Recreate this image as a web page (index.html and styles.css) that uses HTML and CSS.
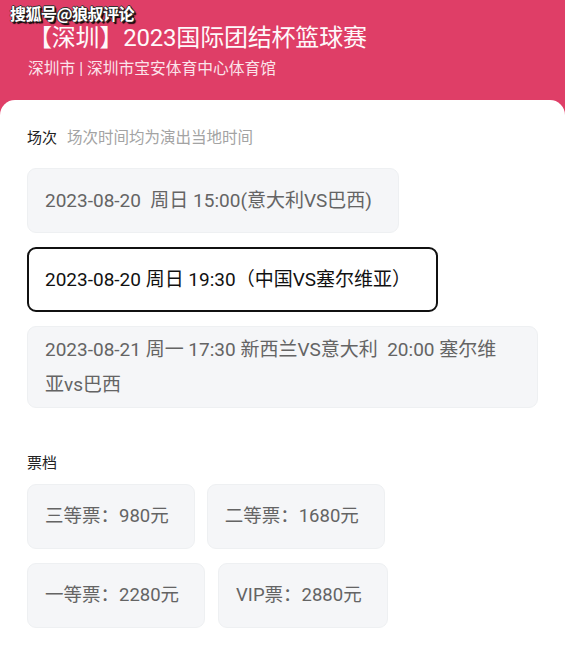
FILE: index.html
```html
<!DOCTYPE html>
<html lang="zh-CN">
<head>
<meta charset="utf-8">
<title>2023国际团结杯篮球赛</title>
<link rel="stylesheet" href="styles.css">
</head>
<body>
<div class="page">
  <div class="watermark">搜狐号@狼叔评论</div>
  <header class="hero">
    <h1 class="title">【深圳】2023国际团结杯篮球赛</h1>
    <p class="venue">深圳市 | 深圳市宝安体育中心体育馆</p>
  </header>
  <main class="panel">
    <div class="section-head">
      <span class="section-title">场次</span>
      <span class="section-hint">场次时间均为演出当地时间</span>
    </div>
    <div class="session-list">
      <div class="option">2023-08-20&nbsp; 周日 15:00(意大利VS巴西)</div>
      <div class="option selected">2023-08-20 周日 19:30（中国VS塞尔维亚）</div>
      <div class="option multi">2023-08-21 周一 17:30 新西兰VS意大利&nbsp; 20:00 塞尔维亚vs巴西</div>
    </div>
    <div class="section-head tickets-head">
      <span class="section-title">票档</span>
    </div>
    <div class="ticket-grid">
      <div class="ticket-row">
        <div class="option ticket">三等票：980元</div>
        <div class="option ticket">二等票：1680元</div>
      </div>
      <div class="ticket-row row-b">
        <div class="option ticket">一等票：2280元</div>
        <div class="option ticket">VIP票：2880元</div>
      </div>
    </div>
  </main>
</div>
</body>
</html>
```

FILE: styles.css
```css
* { box-sizing: border-box; }
html, body {
  margin: 0;
  padding: 0;
}
body {
  background: #df3e67;
  font-family: Roboto, "Noto Sans CJK SC", sans-serif;
  width: 565px;
  height: 670px;
  overflow: hidden;
}
.page {
  position: relative;
  display: flex;
  flex-direction: column;
  min-height: 670px;
}
.watermark {
  position: absolute;
  left: 10px;
  top: 2px;
  font-family: "Noto Sans CJK SC", sans-serif;
  font-size: 16px;
  font-weight: 700;
  line-height: 22px;
  color: #fff;
  text-shadow: 1px 1px 0 #222, -1px 0 0 #333, 0 -1px 0 #333, 1px 0 0 #222, 2px 2px 1px #000;
  letter-spacing: -0.5px;
  z-index: 2;
}
.hero {
  height: 100px;
  padding: 21px 0 0 28px;
  color: #fff;
}
.title {
  margin: 0;
  font-weight: 400;
  font-size: 24px;
  line-height: 34px;
  letter-spacing: -0.2px;
  opacity: 0.97;
}
.venue {
  margin: 4px 0 0 0;
  font-size: 15.75px;
  line-height: 20px;
  color: #fbe3ea;
}
.panel {
  flex: 1;
  background: #fff;
  border-radius: 15px 15px 0 0;
  padding: 28px 27px 0 27px;
}
.section-head {
  display: flex;
  align-items: center;
  gap: 10px;
  line-height: 20px;
}
.section-title {
  font-size: 15px;
  color: #222;
}
.section-hint {
  font-size: 15.5px;
  color: #a3a3a3;
}
.session-list {
  margin-top: 20px;
  display: flex;
  flex-direction: column;
  align-items: flex-start;
  gap: 14px;
}
.option {
  display: flex;
  align-items: center;
  min-height: 65px;
  padding: 5px 26px 5px 17px;
  background: #f5f6f8;
  border: 1px solid #eef0f2;
  border-radius: 9px;
  font-size: 19px;
  line-height: 35px;
  color: #646464;
  max-width: 100%;
}
.option.selected {
  background: #fff;
  border: 2px solid #111;
  padding: 5px 25px 5px 16px;
  color: #111;
}
.option.multi {
  min-height: 81px;
  width: 100%;
}
.tickets-head {
  margin-top: 45px;
}
.ticket-grid {
  margin-top: 11px;
  display: flex;
  flex-direction: column;
  gap: 14px;
}
.ticket-row {
  display: flex;
  gap: 12px;
}
.ticket-row.row-b {
  gap: 13px;
}
.option.ticket {
  font-size: 18.5px;
  padding: 0 25px 0 17px;
}
```
